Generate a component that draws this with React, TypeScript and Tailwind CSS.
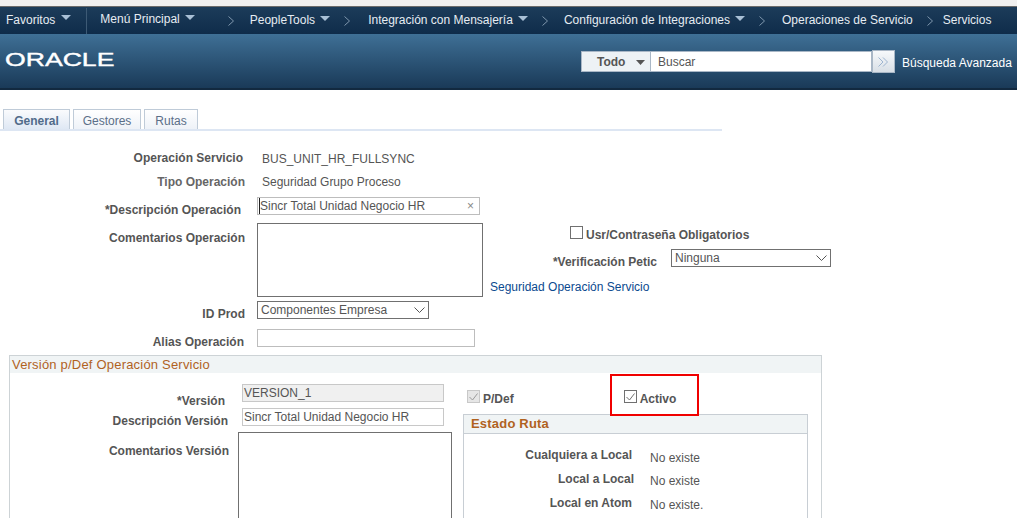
import { ReactNode } from 'react'

const sans = { fontFamily: '"Liberation Sans", Arial, sans-serif' }

function Caret() {
  return (
    <svg width="10" height="5" viewBox="0 0 10 5" className="shrink-0">
      <polygon points="0,0 10,0 5,5" fill="#a9c0d6" />
    </svg>
  )
}

function Sep({ className }: { className: string }) {
  return (
    <svg width="6" height="10" viewBox="0 0 6 10" className={`shrink-0 ${className}`}>
      <path d="M0.5 0.5 L5.5 5 L0.5 9.5" fill="none" stroke="#7f97ad" strokeWidth="1" />
    </svg>
  )
}

function Chevron() {
  return (
    <svg width="11" height="6" viewBox="0 0 11 6">
      <path d="M0.5 0.5 L5.5 5.5 L10.5 0.5" fill="none" stroke="#555" strokeWidth="1" />
    </svg>
  )
}

function Check({ on, off }: { on?: boolean; off?: boolean }) {
  return (
    <span className={`flex h-[13px] w-[13px] shrink-0 items-center justify-center border ${off ? 'border-[#c8c8c8] bg-[#e6e6e6]' : 'border-[#707070] bg-white'}`}>
      {on && (
        <svg width="9" height="8" viewBox="0 0 9 8">
          <path d="M0.5 4 L3.5 7 L8.5 0.5" fill="none" stroke={off ? '#9a9a9a' : '#707070'} strokeWidth="1" />
        </svg>
      )}
    </span>
  )
}

function Label({ w, children, className = '' }: { w: string; children: ReactNode; className?: string }) {
  return <div className={`shrink-0 text-right font-bold text-[#555] ${w} ${className}`}>{children}</div>
}

export default function App() {
  return (
    <div className="h-[518px] w-[1017px] overflow-hidden bg-white text-[12px] leading-[16px] text-[#555]" style={sans}>
      <div className="h-[6px] bg-[#f0f0f0]" />

      {/* top nav */}
      <div className="flex h-[28px] items-center border-t border-[#6b6b6b] bg-gradient-to-b from-[#1c3c5a] to-[#0f2c4a] text-[#e6ecf2]">
        <span className="ml-[6px] -mt-[2px]">Favoritos</span>
        <span className="ml-[6px] -mt-[7px]"><Caret /></span>
        <div className="ml-[15px] h-[26px] w-px bg-[#3d5a75]" />
        <span className="ml-[13px] -mt-[3px]">Menú Principal</span>
        <span className="ml-[5px] -mt-[7px]"><Caret /></span>
        <Sep className="ml-[33px] mt-[1px]" />
        <span className="ml-[16px] -mt-[2px]">PeopleTools</span>
        <span className="ml-[5px] -mt-[5px]"><Caret /></span>
        <Sep className="ml-[14px] mt-[1px]" />
        <span className="ml-[18px] -mt-[2px]">Integración con Mensajería</span>
        <span className="ml-[5px] -mt-[5px]"><Caret /></span>
        <Sep className="ml-[14px] mt-[1px]" />
        <span className="ml-[16px] -mt-[2px]">Configuración de Integraciones</span>
        <span className="ml-[5px] -mt-[5px]"><Caret /></span>
        <Sep className="ml-[14px] mt-[1px]" />
        <span className="ml-[17px] -mt-[2px]">Operaciones de Servicio</span>
        <Sep className="ml-[14px] mt-[1px]" />
        <span className="ml-[10px] -mt-[2px]">Servicios</span>
      </div>

      {/* brand bar */}
      <div className="flex h-[56px] items-center border-b-2 border-[#12293f] bg-gradient-to-b from-[#3f7096] to-[#1a3a58]">
        <div className="ml-[5px] w-[576px] -mt-[2px]">
          <span className="inline-block origin-left scale-x-[1.4] text-[19px] leading-[20px] text-white [-webkit-text-stroke:0.4px_white]">ORACLE</span>
        </div>
        <div className="mt-[1px] flex h-[21px] w-[70px] items-center border border-[#a9b7c6] bg-[#edf2f5]">
          <span className="ml-[15px] font-bold text-[#555]">Todo</span>
          <svg width="9" height="5" viewBox="0 0 9 5" className="ml-[11px] mt-[2px]">
            <polygon points="0,0 9,0 4.5,5" fill="#555" />
          </svg>
        </div>
        <div className="mt-[1px] flex h-[21px] w-[221px] items-center border border-l-0 border-[#a9b7c6] bg-white pl-[7px] text-[#555]">Buscar</div>
        <div className="mt-[1px] flex h-[23px] w-[23px] items-center justify-center border border-[#a9b7c6] bg-gradient-to-b from-[#f7f9fb] to-[#d8dfe6]">
          <svg width="11" height="10" viewBox="0 0 11 10">
            <path d="M0.5 0.5 L5 5 L0.5 9.5 M5 0.5 L9.5 5 L5 9.5" fill="none" stroke="#9db4d0" strokeWidth="1" />
          </svg>
        </div>
        <span className="ml-[7px] mt-[3px] text-white">Búsqueda Avanzada</span>
      </div>

      {/* tabs */}
      <div className="ml-[3px] mt-[19px] flex h-[20px] w-[719px] items-end gap-[3px] text-[12px]">
        <div className="flex h-[20px] w-[67px] items-center justify-center border border-b-0 border-[#bfcbd8] bg-gradient-to-b from-[#fafbfd] to-[#dfe8f4] pt-[2px] font-bold text-[#516b8a]">General</div>
        <div className="flex h-[20px] w-[68px] items-center justify-center border border-b-0 border-[#bfcbd8] bg-gradient-to-b from-white to-[#eef2f8] pt-[2px] text-[#5b6f88]">Gestores</div>
        <div className="flex h-[20px] w-[54px] items-center justify-center border border-b-0 border-[#bfcbd8] bg-gradient-to-b from-white to-[#eef2f8] pt-[2px] text-[#5b6f88]">Rutas</div>
      </div>
      <div className="h-[2px] w-[722px] bg-[#dde6f3]" />

      {/* form */}
      <div className="mt-[19px] flex h-[16px] items-center">
        <Label w="w-[243px]" className="-mt-[1px]">Operación Servicio</Label>
        <span className="ml-[19px] mt-[1px]">BUS_UNIT_HR_FULLSYNC</span>
      </div>
      <div className="mt-[8px] flex h-[16px] items-center">
        <Label w="w-[245px]" className="text-[#666]">Tipo Operación</Label>
        <span className="ml-[17px]">Seguridad Grupo Proceso</span>
      </div>
      <div className="mt-[7px] flex h-[18px]">
        <Label w="w-[241px]" className="pt-[5px]">*Descripción Operación</Label>
        <div className="ml-[16px] flex h-[18px] w-[223px] items-center justify-between border border-[#bdbdbd] pl-[1px] pr-[5px]">
          <span className="border-l border-[#222]">Sincr Total Unidad Negocio HR</span>
          <span className="text-[12px] text-[#888]">×</span>
        </div>
      </div>
      <div className="mt-[8px] flex h-[74px]">
        <Label w="w-[245px]" className="pt-[7px]">Comentarios Operación</Label>
        <div className="ml-[12px] h-[74px] w-[226px] shrink-0 border border-[#707070]" />
        <div className="ml-[7px] flex-1">
          <div className="ml-[80px] mt-[3px] flex h-[13px] items-center">
            <Check />
            <span className="ml-[3px] mt-[5px] font-bold">Usr/Contraseña Obligatorios</span>
          </div>
          <div className="mt-[10px] flex h-[18px]">
            <Label w="w-[167px]" className="pt-[5px]">*Verificación Petic</Label>
            <div className="ml-[14px] flex h-[18px] w-[160px] items-center justify-between border border-[#707070] pl-[3px] pr-[3px]">
              <span className="-mt-[1px]">Ninguna</span>
              <Chevron />
            </div>
          </div>
          <div className="mt-[12px] text-[#0b4a8f]">Seguridad Operación Servicio</div>
        </div>
      </div>
      <div className="mt-[4px] flex h-[18px]">
        <Label w="w-[245px]" className="pt-[5px]">ID Prod</Label>
        <div className="ml-[12px] flex h-[18px] w-[172px] items-center justify-between border border-[#707070] pl-[3px] pr-[3px]">
          <span className="-mt-[1px]">Componentes Empresa</span>
          <Chevron />
        </div>
      </div>
      <div className="mt-[10px] flex h-[18px]">
        <Label w="w-[244px]" className="pt-[5px]">Alias Operación</Label>
        <div className="ml-[13px] h-[18px] w-[218px] border border-[#bdbdbd]" />
      </div>

      {/* default version section */}
      <div className="ml-[9px] mt-[8px] h-[200px] w-[813px] border border-[#cdd3d6]">
        <div className="h-[17px] bg-[#f0f4f5] pl-[2px] pt-[1px] text-[13px] leading-[16px] tracking-[0.2px] text-[#b0621f]">Versión p/Def Operación Servicio</div>
        <div className="flex">
          <div className="w-[443px] shrink-0">
            <div className="mt-[11px] flex h-[18px]">
              <Label w="w-[215px]" className="pt-[9px]">*Versión</Label>
              <div className="ml-[17px] flex h-[18px] w-[202px] items-center border border-[#c8c8c8] bg-[#f0f0f0] pl-[1px]">VERSION_1</div>
            </div>
            <div className="mt-[6px] flex h-[18px]">
              <Label w="w-[218px]" className="pt-[5px]">Descripción Versión</Label>
              <div className="ml-[14px] flex h-[18px] w-[202px] items-center border border-[#c8c8c8] pl-[1px]">Sincr Total Unidad Negocio HR</div>
            </div>
            <div className="mt-[6px] flex">
              <Label w="w-[219px]" className="pt-[11px]">Comentarios Versión</Label>
              <div className="ml-[9px] h-[100px] w-[214px] border border-[#707070]" />
            </div>
          </div>
          <div className="ml-[10px] w-[345px] shrink-0">
            <div className="flex h-[41px] items-start pt-[17px]">
              <div className="ml-[4px] flex h-[13px] items-center">
                <Check on off />
                <span className="ml-[3px] mt-[5px] font-bold">P/Def</span>
              </div>
              <div className="relative ml-[110px] flex h-[13px] items-center">
                <Check on />
                <span className="ml-[3px] mt-[5px] font-bold">Activo</span>
                {/* annotation box */}
                <div className="absolute -left-[14px] -top-[16px] h-[42px] w-[89px] border-2 border-[#f00000]" />
              </div>
            </div>
            <div className="border border-[#c8ced4]">
              <div className="h-[19px] border-b border-[#c8ced4] bg-[#f0f4f5] pl-[7px] pt-[1px] text-[13px] font-bold leading-[16px] tracking-[0.2px] text-[#b0621f]">Estado Ruta</div>
              <div className="flex h-[24px] items-center pt-[17px]">
                <Label w="w-[168px]">Cualquiera a Local</Label>
                <span className="ml-[18px] mt-[7px]">No existe</span>
              </div>
              <div className="mt-[17px] flex h-[8px] items-center">
                <Label w="w-[170px]">Local a Local</Label>
                <span className="ml-[16px] mt-[4px]">No existe</span>
              </div>
              <div className="mt-[16px] flex h-[8px] items-center">
                <Label w="w-[168px]">Local en Atom</Label>
                <span className="ml-[18px] mt-[4px]">No existe.</span>
              </div>
              <div className="h-[40px]" />
            </div>
          </div>
        </div>
      </div>
    </div>
  )
}
